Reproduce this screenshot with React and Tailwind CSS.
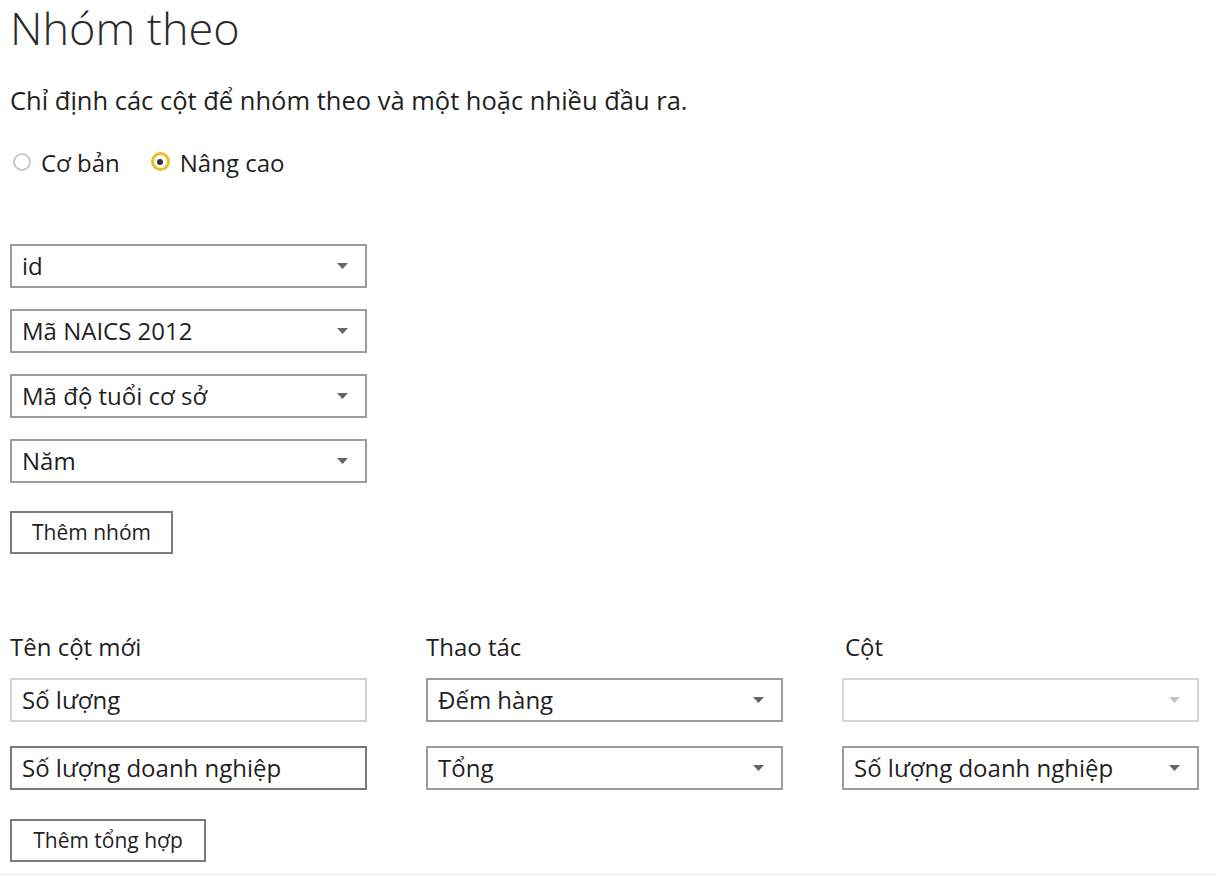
import React from "react";

const Caret = ({ muted }) => (
  <svg width="11" height="6" viewBox="0 0 11 6" className="shrink-0">
    <path d="M0 0 L11 0 L5.5 6 Z" fill={muted ? "#c4c4c4" : "#666666"} />
  </svg>
);

const Select = ({ value, disabled }) => (
  <div
    className={`flex h-[44px] w-[357px] items-center justify-between border-2 pl-[10px] pr-[17px] ${
      disabled ? "border-[#d6d6d6]" : "border-[#9c9c9c]"
    }`}
  >
    <span className="text-[24px] leading-none text-[#1f1f1f]">{value}</span>
    <Caret muted={disabled} />
  </div>
);

const TextBox = ({ value, strong }) => (
  <div
    className={`flex h-[44px] w-[357px] items-center border-2 pl-[10px] ${
      strong ? "border-[#7a7a7a]" : "border-[#d2d2d2]"
    }`}
  >
    <span className="text-[24px] leading-none text-[#1f1f1f]">{value}</span>
  </div>
);

const Button = ({ label, width }) => (
  <div
    className={`flex h-[43px] ${width} items-center justify-center border-2 border-[#7c7c7c] text-[21px] text-[#1f1f1f]`}
  >
    {label}
  </div>
);

const App = () => {
  const groups = ["id", "Mã NAICS 2012", "Mã độ tuổi cơ sở", "Năm"];

  return (
    <div
      className="min-h-[876px] w-[1216px] bg-white"
      style={{ fontFamily: '"Open Sans", "Noto Sans", sans-serif' }}
    >
      <div className="flex flex-col px-[10px]">
        <h1 className="text-[45px] font-light leading-[56px] text-[#2b2b2b]">
          Nhóm theo
        </h1>

        <p className="mt-[27px] text-[25.5px] leading-[34px] text-[#1f1f1f]">
          Chỉ định các cột để nhóm theo và một hoặc nhiều đầu ra.
        </p>

        {/* Basic / advanced */}
        <div className="mt-[30px] flex h-[32px] items-center text-[24px] text-[#1f1f1f]">
          <span className="ml-[3px] mr-[10px] -mt-[3px] h-[18px] w-[18px] rounded-full border-2 border-[#c8c8c8]" />
          <span>Cơ bản</span>
          <span className="ml-[31px] mr-[10px] -mt-[3px] flex h-[19px] w-[19px] items-center justify-center rounded-full border-[3px] border-[#e6c12a]">
            <span className="h-[6px] w-[6px] rounded-full bg-[#333]" />
          </span>
          <span>Nâng cao</span>
        </div>

        {/* Group by */}
        <div className="mt-[65px] flex flex-col gap-[21px]">
          {groups.map((g) => (
            <Select key={g} value={g} />
          ))}
        </div>

        <div className="mt-[28px]">
          <Button label="Thêm nhóm" width="w-[163px]" />
        </div>

        {/* Aggregations */}
        <div className="mt-[78px] grid grid-cols-[357px_357px_357px] gap-x-[59px] text-[24px] leading-[30px] text-[#1f1f1f]">
          <span>Tên cột mới</span>
          <span>Thao tác</span>
          <span className="pl-[3px]">Cột</span>
        </div>

        <div className="mt-[16px] grid grid-cols-[357px_357px_357px] gap-x-[59px] gap-y-[24px]">
          <TextBox value="Số lượng" />
          <Select value="Đếm hàng" />
          <Select value="" disabled />
          <TextBox value="Số lượng doanh nghiệp" strong />
          <Select value="Tổng" />
          <Select value="Số lượng doanh nghiệp" />
        </div>

        <div className="mt-[29px]">
          <Button label="Thêm tổng hợp" width="w-[196px]" />
        </div>
      </div>

      <div className="mt-[12px] border-b border-[#ececec]" />
    </div>
  );
};

export default App;
